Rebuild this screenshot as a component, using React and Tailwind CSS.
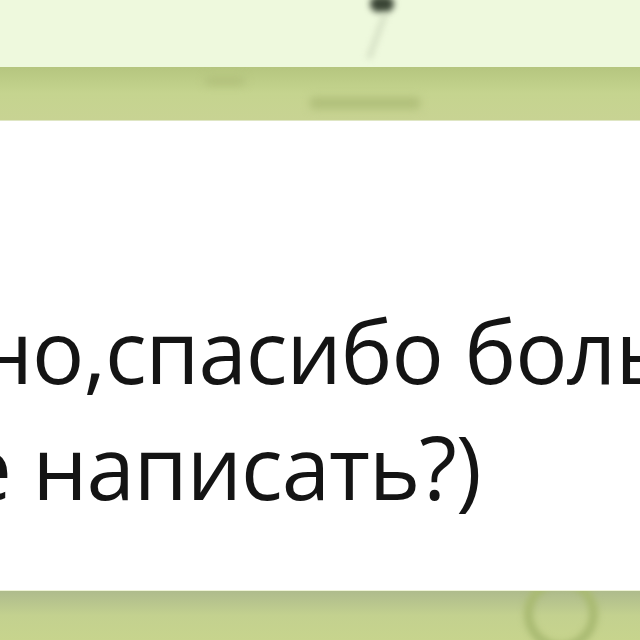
export default function App() {
  return (
    <div className="w-[640px] h-[640px] overflow-hidden bg-white flex flex-col" style={{ fontFamily: '"Open Sans", "Noto Sans", sans-serif' }}>
      {/* previous message bubble, only the bottom of a letter is visible */}
      <div className="h-[67px] shrink-0 bg-[#eef9dd] overflow-hidden flex flex-col items-start pl-[366px]">
        <div className="w-[24px] h-[16px] -mt-[4px] ml-[4px] rounded-full bg-[#3a4535] blur-[3px]" />
        <div className="w-[6px] h-[48px] ml-[8px] rotate-[20deg] bg-[#c9d4b8] blur-[3px] opacity-60" />
      </div>

      {/* date bar */}
      <div className="h-[54px] shrink-0 bg-gradient-to-b from-[#b5c67f] via-[#c5d48f] to-[#c8d393] border-b border-[#dfe6c4] flex flex-col pl-[205px] pt-[10px] gap-[12px]">
        <div className="w-[40px] h-[8px] rounded bg-[#b0bf7a] blur-[4px]" />
        <div className="w-[110px] h-[12px] ml-[105px] rounded bg-[#b0bf7a] blur-[4px]" />
      </div>

      {/* message */}
      <div className="flex-1 bg-white pt-[171px] overflow-hidden">
        <div className="-ml-[22px] whitespace-nowrap text-[#141414] text-[87px] leading-[116px] tracking-[-1px]">
          <div>но,спасибо больше</div>
          <div className="-ml-[140px]">ещё написать?)</div>
        </div>
      </div>

      {/* input bar */}
      <div className="h-[50px] shrink-0 bg-gradient-to-b from-[#aebb8c] via-[#c3d18f] to-[#c7d48d] border-t border-[#eef3d6] flex justify-end pr-[42px] overflow-hidden">
        <div className="w-[74px] h-[74px] shrink-0 -mt-[14px] rounded-full border-[9px] border-[#a9ba72] blur-[3px]" />
      </div>
    </div>
  );
}
